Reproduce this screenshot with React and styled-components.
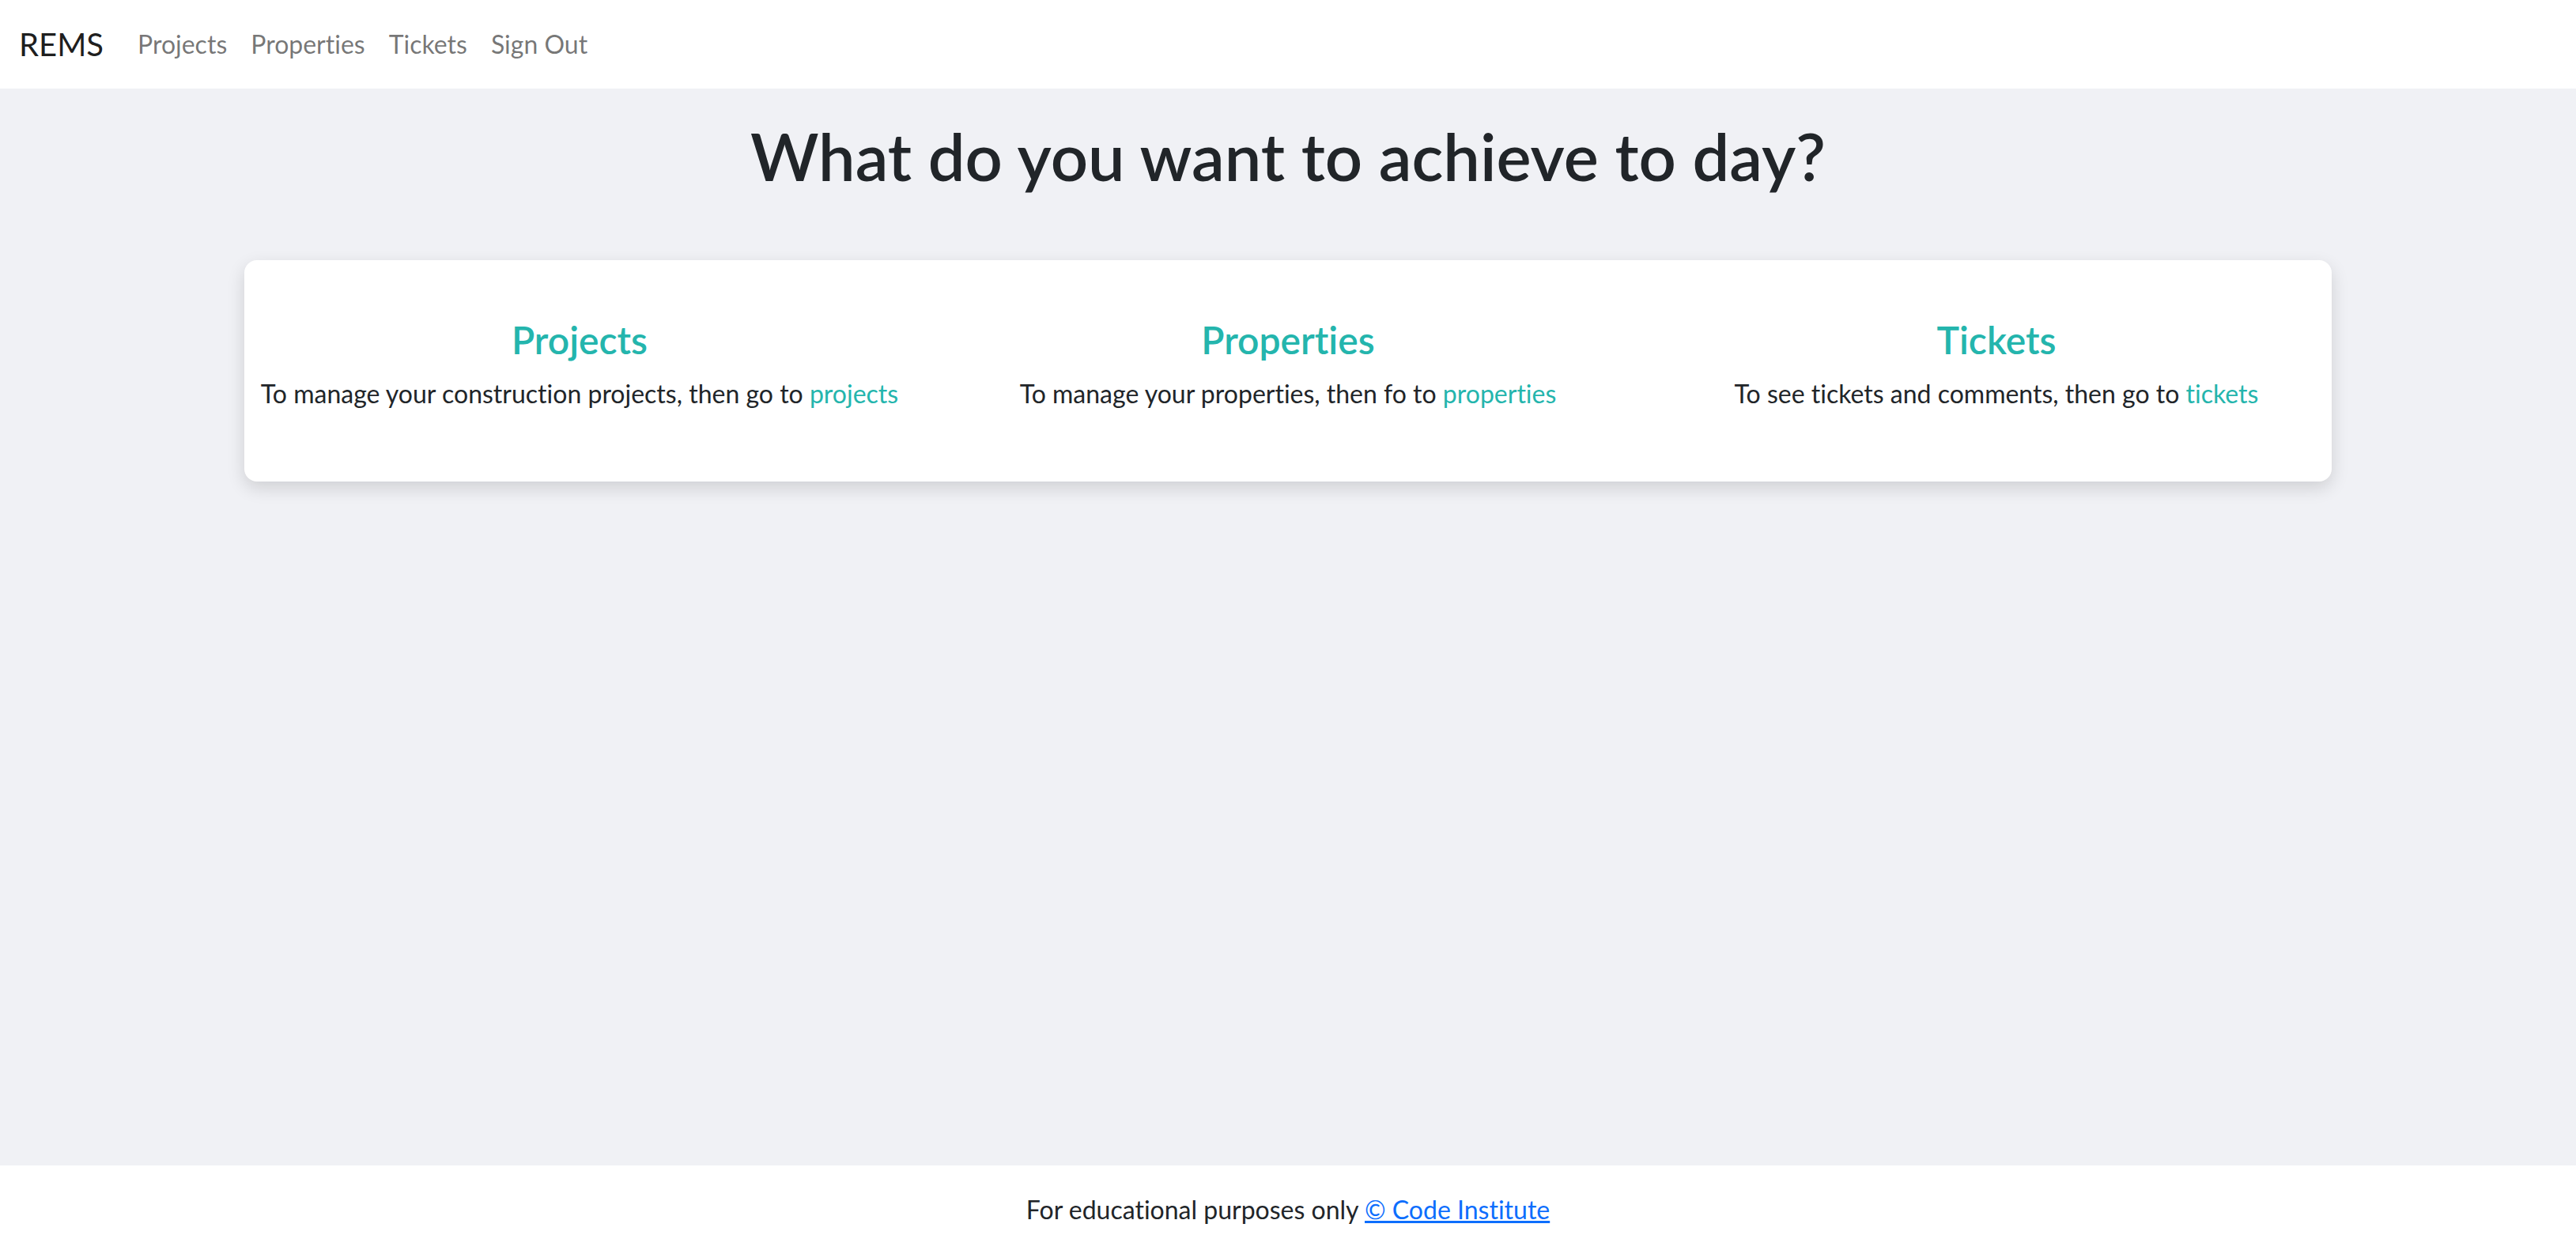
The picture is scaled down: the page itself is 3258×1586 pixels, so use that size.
import React from "react";
import styled, { createGlobalStyle } from "styled-components";

const colors = {
  teal: "#24b5ad",
  text: "#212529",
  muted: "rgba(0, 0, 0, 0.55)",
  page: "#f0f1f5",
  link: "#0d6efd",
};

const GlobalStyle = createGlobalStyle`
  * { box-sizing: border-box; }
  body {
    margin: 0;
    font-family: "Segoe UI", "Lato", "Liberation Sans", sans-serif;
    font-variant-ligatures: none;
    color: ${colors.text};
    background: ${colors.page};
    font-size: 32px;
    line-height: 1.5;
  }
`;

const Page = styled.div`
  min-height: 100vh;
  display: flex;
  flex-direction: column;
`;

const Navbar = styled.nav`
  height: 112px;
  background: #fff;
  display: flex;
  align-items: center;
  padding: 0 24px;
`;

const Brand = styled.a`
  font-size: 40px;
  color: rgba(0, 0, 0, 0.9);
  text-decoration: none;
  margin-right: 28px;
`;

const NavList = styled.div`
  display: flex;
`;

const NavLink = styled.a`
  font-size: 32px;
  color: ${colors.muted};
  text-decoration: none;
  padding: 0 15px;
`;

const Main = styled.main`
  flex: 1;
  display: flex;
  flex-direction: column;
  align-items: center;
`;

const Heading = styled.h1`
  font-size: 83px;
  font-weight: 600;
  line-height: 1.2;
  margin: 36px 0 81px;
  text-align: center;
`;

const Card = styled.section`
  width: 2640px;
  background: #fff;
  border-radius: 16px;
  box-shadow: 0 8px 22px rgba(0, 0, 0, 0.14);
  padding: 72px 0 87px;
`;

const Row = styled.div`
  display: grid;
  grid-template-columns: repeat(3, 1fr);
  margin: 0 -24px;
`;

const Column = styled.div`
  padding: 0 24px;
  text-align: center;
`;

const Title = styled.h4`
  font-size: 48px;
  font-weight: 600;
  line-height: 1.2;
  color: ${colors.teal};
  margin: 0 0 16px;
`;

const Text = styled.p`
  margin: 0;
`;

const Accent = styled.a`
  color: ${colors.teal};
  text-decoration: none;
`;

const Footer = styled.footer`
  height: 112px;
  background: #fff;
  display: flex;
  align-items: center;
  justify-content: center;
`;

const FooterLink = styled.a`
  color: ${colors.link};
  text-decoration: underline;
`;

const sections = [
  { title: "Projects", text: "To manage your construction projects, then go to", link: "projects" },
  { title: "Properties", text: "To manage your properties, then fo to", link: "properties" },
  { title: "Tickets", text: "To see tickets and comments, then go to", link: "tickets" },
];

const App = () => {
  return (
    <Page>
      <GlobalStyle />
      <Navbar>
        <Brand href="#">REMS</Brand>
        <NavList>
          <NavLink href="#">Projects</NavLink>
          <NavLink href="#">Properties</NavLink>
          <NavLink href="#">Tickets</NavLink>
          <NavLink href="#">Sign Out</NavLink>
        </NavList>
      </Navbar>
      <Main>
        <Heading>What do you want to achieve to day?</Heading>
        <Card>
          <Row>
            {sections.map((s) => (
              <Column key={s.title}>
                <Title>{s.title}</Title>
                <Text>
                  {s.text} <Accent href="#">{s.link}</Accent>
                </Text>
              </Column>
            ))}
          </Row>
        </Card>
      </Main>
      <Footer>
        <span>
          For educational purposes only <FooterLink href="#">© Code Institute</FooterLink>
        </span>
      </Footer>
    </Page>
  );
};

export default App;
